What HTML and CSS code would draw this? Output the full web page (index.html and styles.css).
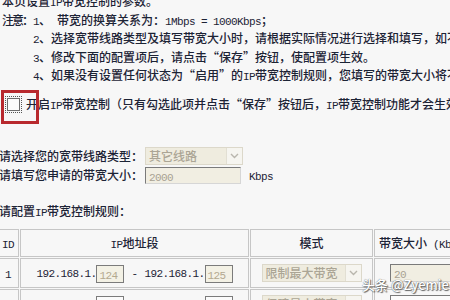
FILE: index.html
```html
<!DOCTYPE html>
<html lang="zh-CN">
<head>
    <meta charset="UTF-8">
    <title>IP带宽控制</title>
    <link rel="stylesheet" href="styles.css">
</head>
<body>
    <p class="intro">本页设置<span class="en">IP</span>带宽控制的参数。</p>

    <div class="notes">
        <div class="notes-label">注意：</div>
        <ul class="notes-list">
            <li><span class="en">1</span>、<span class="en">&nbsp;</span>带宽的换算关系为：<span class="en">1Mbps = 1000Kbps</span>；</li>
            <li><span class="en">2</span>、选择宽带线路类型及填写带宽大小时，请根据实际情况进行选择和填写，如不清楚，请咨询您的带宽提供商。</li>
            <li><span class="en">3</span>、修改下面的配置项后，请点击“保存”按钮，使配置项生效。</li>
            <li><span class="en">4</span>、如果没有设置任何状态为“启用”的<span class="en">IP</span>带宽控制规则，您填写的带宽大小将不起作用。</li>
        </ul>
    </div>

    <div class="enable-row">
        <span class="check"></span>
        <span>开启<span class="en">IP</span>带宽控制（只有勾选此项并点击“保存”按钮后，<span class="en">IP</span>带宽控制功能才会生效）</span>
    </div>

    <div class="field-row first">
        <span class="field-label">请选择您的宽带线路类型：</span>
        <div class="select line-select">
            <span>其它线路</span>
            <span class="select-arrow"><svg width="9" height="6" viewBox="0 0 9 6"><polyline points="1,1 4.5,4.5 8,1" fill="none" stroke="#b9b6ad" stroke-width="1.4"/></svg></span>
        </div>
    </div>
    <div class="field-row">
        <span class="field-label">请填写您申请的带宽大小：</span>
        <div class="text-box total-box"><span class="en">2000</span></div>
        <span class="unit"><span class="en">Kbps</span></span>
    </div>

    <p class="rules-title">请配置<span class="en">IP</span>带宽控制规则：</p>

    <table class="rules">
        <colgroup>
            <col class="col-id">
            <col class="col-ip">
            <col class="col-mode">
            <col class="col-bw">
        </colgroup>
        <tr>
            <th><span class="en">ID</span></th>
            <th><span class="en">IP</span>地址段</th>
            <th>模式</th>
            <th>带宽大小<span class="en"> (Kbps)</span></th>
        </tr>
        <tr>
            <td><span class="en">1</span></td>
            <td>
                <span class="en">192.168.1.</span><span class="ip-box"><span class="en">124</span></span><span class="en dash">-</span><span class="en">192.168.1.</span><span class="ip-box"><span class="en">125</span></span>
            </td>
            <td>
                <div class="select mode-select">
                    <span>限制最大带宽</span>
                    <span class="select-arrow"><svg width="9" height="6" viewBox="0 0 9 6"><polyline points="1,1 4.5,4.5 8,1" fill="none" stroke="#b9b6ad" stroke-width="1.4"/></svg></span>
                </div>
            </td>
            <td><div class="text-box bw-box"><span class="en">20</span></div></td>
        </tr>
        <tr>
            <td><span class="en">2</span></td>
            <td>
                <span class="en">192.168.1.</span><span class="ip-box empty"></span><span class="en dash">-</span><span class="en">192.168.1.</span><span class="ip-box empty"></span>
            </td>
            <td>
                <div class="select mode-select">
                    <span>保障最小带宽</span>
                    <span class="select-arrow"><svg width="9" height="6" viewBox="0 0 9 6"><polyline points="1,1 4.5,4.5 8,1" fill="none" stroke="#b9b6ad" stroke-width="1.4"/></svg></span>
                </div>
            </td>
            <td><div class="text-box bw-box empty"></div></td>
        </tr>
    </table>

    <div class="mark-box"></div>
    <div class="watermark">头条 @Zyemie</div>
</body>
</html>
```

FILE: styles.css
```css
* {
    margin: 0;
    padding: 0;
    box-sizing: border-box;
}

html, body {
    height: 100%;
    overflow: hidden;
}

body {
    position: relative;
    background: #f7f7f7;
    color: #1c2335;
    font-family: "Noto Sans CJK SC", sans-serif;
    font-size: 12px;
    font-weight: 500;
    line-height: 18.5px;
    white-space: nowrap;
}

/* latin runs: half-width, like the old bitmap font */
.en {
    font-family: "Liberation Mono", monospace;
    font-size: 11px;
    line-height: 0;
    letter-spacing: -0.6px;
}

.intro {
    margin-top: -8px;
    padding-left: 2px;
}

.notes {
    display: flex;
    padding-left: 2px;
}

.notes-label {
    width: 31px;
    flex-shrink: 0;
    letter-spacing: -2px;
}

.notes-list {
    list-style: none;
}

.enable-row {
    display: flex;
    align-items: center;
    height: 18px;
    margin-top: 11px;
    padding-left: 7px;
}

.check {
    flex-shrink: 0;
    width: 13px;
    height: 13px;
    border: 1px solid #6d6d6d;
    background: #fbfbfb;
    outline: 1px dotted #555;
    outline-offset: 1px;
    margin-right: 6px;
}

.field-row {
    display: flex;
    align-items: center;
    height: 19px;
    margin-left: -1px;
}

.field-row.first {
    margin-top: 33px;
}

.field-label {
    flex-shrink: 0;
    width: 146px;
}

.select {
    display: flex;
    flex-shrink: 0;
    align-items: center;
    justify-content: space-between;
    height: 18px;
    background: #efecdf;
    border: 1px solid #dcd8ca;
    color: #aba595;
    padding-left: 3px;
    text-align: left;
}

.line-select {
    width: 98px;
}

.mode-select {
    width: 100px;
    margin: 0 auto;
}

.select-arrow {
    display: flex;
    align-items: center;
    justify-content: center;
    width: 16px;
    height: 16px;
    background: #f6f5f0;
    border-left: 1px solid #e2dfd3;
}

.text-box {
    flex-shrink: 0;
    height: 17px;
    background: #f1eee2;
    border: 1px solid;
    border-color: #7a7a7a #d6d6d6 #d6d6d6 #7a7a7a;
    color: #a8a292;
    padding-left: 3px;
    line-height: 15px;
    text-align: left;
}

.total-box {
    width: 96px;
}

.unit {
    margin-left: 8px;
}

.rules-title {
    margin-top: 17px;
    margin-left: -1px;
}

.rules {
    margin-top: 8px;
    margin-left: -4px;
    width: 479px;
    table-layout: fixed;
    border-collapse: separate;
    border-spacing: 1px;
}

.rules th,
.rules td {
    border: 1px solid #c6c6c6;
    text-align: center;
    font-weight: 500;
    vertical-align: middle;
}

.rules th {
    height: 28px;
}

.rules td {
    height: 30px;
}

.col-id { width: 22px; }
.col-ip { width: 229px; }
.col-mode { width: 123px; }
.col-bw { width: 100px; }

.ip-box {
    display: inline-block;
    width: 28px;
    height: 18px;
    border: 1px solid #7b7b7b;
    background: #f3f1e5;
    color: #b3a98f;
    vertical-align: middle;
    text-align: left;
    padding-left: 2px;
    line-height: 16px;
}

.ip-box.empty,
.text-box.empty {
    background: #fbfbfb;
}

.dash {
    margin: 0 7px;
}

.bw-box {
    width: 66px;
    margin-left: 15px;
    height: 18px;
}

.mark-box {
    position: absolute;
    left: 1px;
    top: 90px;
    width: 38px;
    height: 34px;
    border: 3px solid #b8292e;
}

.watermark {
    position: absolute;
    left: 362px;
    top: 277px;
    font-size: 13px;
    line-height: 16px;
    color: #fff;
    text-shadow: 0 0 1px #444, 1px 1px 1px #666;
}
```
